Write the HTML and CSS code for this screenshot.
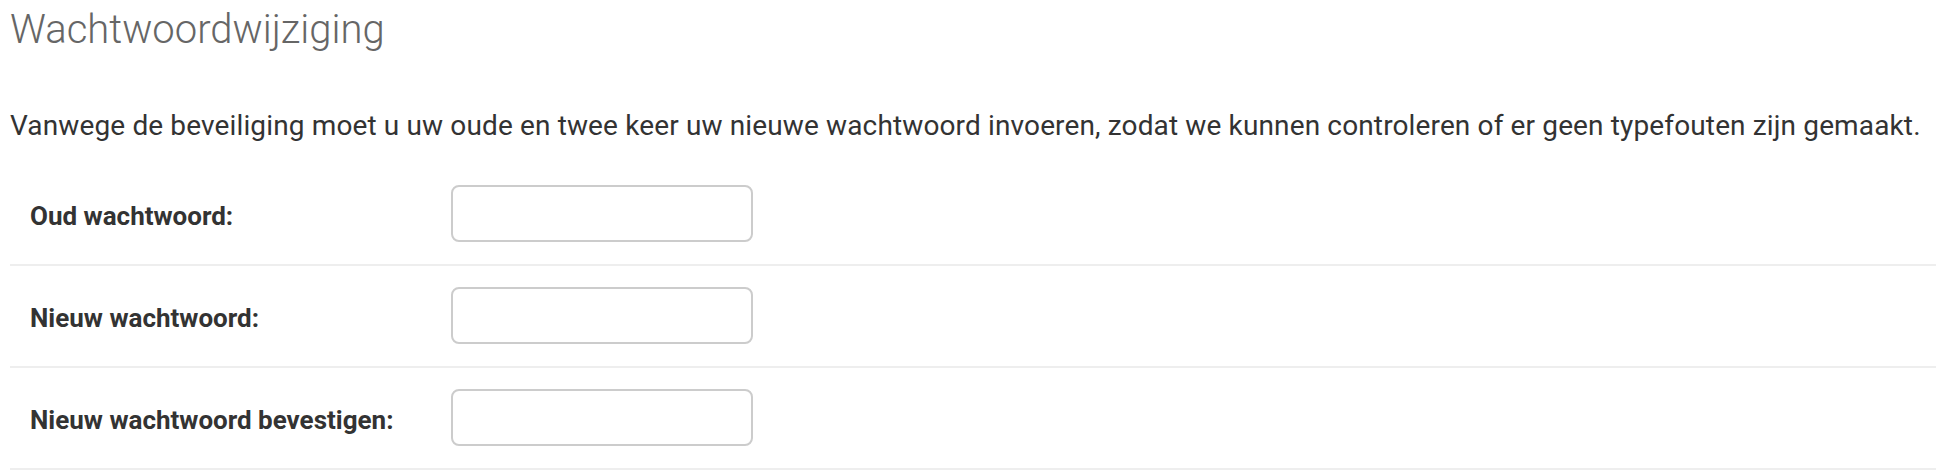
FILE: index.html
```html
<!DOCTYPE html>
<html lang="nl">
<head>
<meta charset="utf-8">
<title>Wachtwoordwijziging</title>
<link rel="stylesheet" href="styles.css">
</head>
<body>
<div class="content">
  <h1 class="title">Wachtwoordwijziging</h1>
  <p class="intro">Vanwege de beveiliging moet u uw oude en twee keer uw nieuwe wachtwoord invoeren, zodat we kunnen controleren of er geen typefouten zijn gemaakt.</p>
  <form class="form">
    <div class="form-row">
      <label class="label" for="old">Oud wachtwoord:</label>
      <input class="field" id="old" type="password">
    </div>
    <div class="form-row">
      <label class="label" for="new1">Nieuw wachtwoord:</label>
      <input class="field" id="new1" type="password">
    </div>
    <div class="form-row">
      <label class="label" for="new2">Nieuw wachtwoord bevestigen:</label>
      <input class="field" id="new2" type="password">
    </div>
  </form>
</div>
</body>
</html>
```

FILE: styles.css
```css
html, body {
  margin: 0;
  padding: 0;
  background: #fff;
}

body {
  font-family: Roboto, "Liberation Sans", sans-serif;
  color: #333;
}

.content {
  padding-left: 10px;
}

.title {
  margin: 6px 0 0 0;
  font-size: 40px;
  font-weight: 300;
  line-height: 48px;
  color: #666;
}

.intro {
  margin: 54px 0 0 0;
  font-size: 28px;
  letter-spacing: 0.135px;
  line-height: 36px;
  color: #333;
}

.form {
  margin-top: 20px;
}

.form-row {
  display: flex;
  align-items: center;
  padding: 21px 0 22px 20px;
  border-bottom: 2px solid #eee;
}

.label {
  width: 421px;
  flex: none;
  font-size: 26px;
  font-weight: 700;
  line-height: 30px;
  padding-top: 4px;
  color: #333;
}

.field {
  box-sizing: border-box;
  width: 302px;
  height: 57px;
  margin: 0;
  border: 2px solid #ccc;
  border-radius: 8px;
  background: #fff;
  padding: 0 10px;
  font-family: inherit;
  font-size: 22px;
}
```
